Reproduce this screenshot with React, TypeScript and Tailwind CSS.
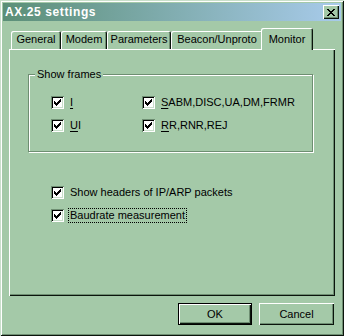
import React from 'react'

const FACE = 'bg-[#a4c9a8]'

function Check() {
  // classic 7x7 check glyph, drawn pixel by pixel
  const px = [
    [6, 0], [5, 1], [6, 1], [0, 2], [4, 2], [5, 2], [6, 2],
    [0, 3], [1, 3], [3, 3], [4, 3], [5, 3], [0, 4], [1, 4], [2, 4], [3, 4], [4, 4],
    [1, 5], [2, 5], [3, 5], [2, 6],
  ]
  return (
    <svg width="7" height="7" viewBox="0 0 7 7" shapeRendering="crispEdges">
      {px.map(([x, y]) => <rect key={`${x}-${y}`} x={x} y={y} width="1" height="1" fill="#000" />)}
    </svg>
  )
}

function CheckBox({ label, ul, focus }: { label: string; ul?: number; focus?: boolean }) {
  const n = ul ?? 0
  return (
    <div className="flex items-center h-[15px]">
      <div className="w-[13px] h-[13px] bg-white flex items-center justify-center shrink-0 shadow-[inset_1px_1px_#6e8e72,inset_-1px_-1px_#ffffff,inset_2px_2px_#000,inset_-2px_-2px_#c9dfcb]">
        <Check />
      </div>
      <span className={`ml-[4px] px-[1px] leading-[13px] border border-dotted ${focus ? 'border-black' : 'border-transparent'}`}>
        <span className="underline underline-offset-[2px]">{label.slice(n, n + 1)}</span>
        {label.slice(n + 1)}
      </span>
    </div>
  )
}

const TABS = [
  { label: 'General', w: 'w-[50px]' },
  { label: 'Modem', w: 'w-[46px]' },
  { label: 'Parameters', w: 'w-[64px]' },
  { label: 'Beacon/Unproto', w: 'w-[92px]' },
]

export default function App() {
  return (
    <div
      className={`w-[344px] h-[336px] ${FACE} p-[3px] flex flex-col text-[11px] text-black shadow-[inset_1px_1px_#c9dfcb,inset_-1px_-1px_#0b140c,inset_2px_2px_#fff,inset_-2px_-2px_#6e8e72]`}
      style={{ fontFamily: '"Liberation Sans", Arial, sans-serif' }}
    >
      {/* title bar */}
      <div className="h-[18px] flex items-center justify-between pl-[2px] pr-[2px] bg-gradient-to-r from-[#5b8f77] to-[#a8cbeb]">
        <span className="text-white font-bold text-[12px] tracking-[0.6px]">AX.25 settings</span>
        <div className={`w-[16px] h-[14px] ${FACE} flex items-center justify-center shadow-[inset_1px_1px_#fff,inset_-1px_-1px_#0b140c,inset_-2px_-2px_#6e8e72]`}>
          <svg width="8" height="7" viewBox="0 0 8 7" shapeRendering="crispEdges">
            <path d="M0 0h2v1h-2zM6 0h2v1h-2zM1 1h2v1h-2zM5 1h2v1h-2zM2 2h4v1h-4zM3 3h2v1h-2zM2 4h4v1h-4zM1 5h2v1h-2zM5 5h2v1h-2zM0 6h2v1h-2zM6 6h2v1h-2z" fill="#000" />
          </svg>
        </div>
      </div>

      <div className="px-[6px] pt-[7px] flex flex-col">
        {/* tabs */}
        <div className="flex items-end h-[21px] pl-[2px] relative z-10">
          {TABS.map(t => (
            <div key={t.label} className={`${t.w} h-[18px] flex items-center justify-center pb-[1px] rounded-t-[2px] shadow-[inset_1px_1px_#fff,inset_-1px_0_#0b140c,inset_-2px_0_#6e8e72]`}>
              {t.label}
            </div>
          ))}
          <div className={`w-[52px] h-[22px] -mx-[2px] -mb-[1px] ${FACE} flex items-start justify-center pt-[3px] rounded-t-[2px] shadow-[inset_1px_1px_#fff,inset_-1px_0_#0b140c,inset_-2px_0_#6e8e72]`}>
            Monitor
          </div>
        </div>

        {/* panel */}
        <div className="h-[247px] pl-[19px] pt-[25px] flex flex-col shadow-[inset_1px_1px_#fff,inset_-1px_-1px_#0b140c,inset_-2px_-2px_#6e8e72]">
          <div className="relative w-[285px] h-[78px] border border-[#6e8e72] shadow-[1px_1px_#fff,inset_1px_1px_#fff] pl-[22px] pt-[20px]">
            <span className={`absolute left-[6px] -top-[7px] px-[2px] ${FACE} leading-[13px]`}>Show frames</span>
            <div className="grid grid-cols-[91px_auto] gap-y-[8px]">
              <CheckBox label="I" />
              <CheckBox label="SABM,DISC,UA,DM,FRMR" />
              <CheckBox label="UI" />
              <CheckBox label="RR,RNR,REJ" />
            </div>
          </div>
          <div className="pl-[23px] pt-[33px] flex flex-col gap-[8px]">
            <CheckBox label="Show headers of IP/ARP packets" ul={-1} />
            <CheckBox label="Baudrate measurement" ul={-1} focus />
          </div>
        </div>

        {/* buttons */}
        <div className="flex justify-end gap-[7px] mt-[7px] pr-[1px]">
          <button className={`w-[74px] h-[22px] ${FACE} border border-black flex items-center justify-center shadow-[inset_1px_1px_#fff,inset_-1px_-1px_#0b140c,inset_-2px_-2px_#6e8e72]`}>
            OK
          </button>
          <button className={`w-[75px] h-[22px] ${FACE} flex items-center justify-center shadow-[inset_1px_1px_#fff,inset_-1px_-1px_#0b140c,inset_-2px_-2px_#6e8e72]`}>
            Cancel
          </button>
        </div>
      </div>
    </div>
  )
}
